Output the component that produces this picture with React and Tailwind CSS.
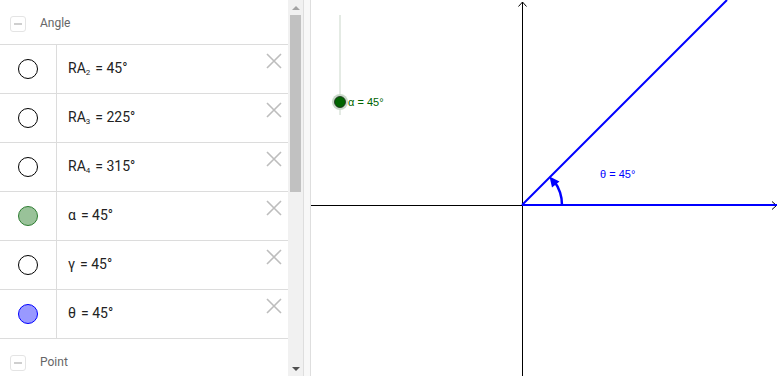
import React from 'react';

const rows = [
  { name: 'RA', sub: '2', value: '45°' },
  { name: 'RA', sub: '3', value: '225°' },
  { name: 'RA', sub: '4', value: '315°' },
  { name: 'α', value: '45°', fill: 'bg-[#99c299]', border: 'border-[#2e7d32]' },
  { name: 'γ', value: '45°' },
  { name: 'θ', value: '45°', fill: 'bg-[#9999ff]', border: 'border-[#0000ff]' },
];

function Cross() {
  return (
    <svg width="16" height="16" viewBox="0 0 16 16" className="absolute right-[6px] top-[8px]">
      <path d="M1 1 L15 15 M15 1 L1 15" stroke="#bdbdbd" strokeWidth="1.6" fill="none" />
    </svg>
  );
}

function GroupHeader({ label }) {
  return (
    <div className="flex h-[44px] shrink-0 items-center gap-[14px] pl-[10px] pt-[4px]">
      <div className="flex h-[16px] w-[16px] items-center justify-center rounded-[3px] border border-[#e4e4e4]">
        <div className="h-[2px] w-[8px] bg-[#cfcfcf]" />
      </div>
      <span className="-mt-[2px] text-[12px] text-[#666]">{label}</span>
    </div>
  );
}

export default function App() {
  return (
    <div
      className="flex h-[376px] w-[779px] overflow-hidden bg-white"
      style={{ fontFamily: 'Roboto, "Liberation Sans", sans-serif' }}
    >
      {/* algebra view */}
      <div className="flex w-[288px] shrink-0 flex-col overflow-hidden">
        <GroupHeader label="Angle" />
        {rows.map((r, i) => (
          <div key={i} className="relative flex h-[49px] shrink-0 border-t border-[#dcdcdc]">
            <div className="flex w-[57px] items-center justify-center border-r border-[#dcdcdc]">
              <div
                className={`h-[20px] w-[20px] rounded-full border ${r.fill || 'bg-white'} ${r.border || 'border-black'}`}
              />
            </div>
            <div className="flex items-center pb-[2px] pl-[11px] text-[14px] text-[#222]">
              <span>{r.name}</span>
              {r.sub && <span className="relative top-[5px] text-[8px]">{r.sub}</span>}
              <span className="ml-[5px]">= {r.value}</span>
            </div>
            <Cross />
          </div>
        ))}
        <div className="shrink-0 border-t border-[#dcdcdc]">
          <GroupHeader label="Point" />
        </div>
      </div>

      {/* scrollbar */}
      <div className="flex w-[15px] shrink-0 flex-col items-center bg-[#f1f1f1]">
        <div className="flex h-[15px] items-center justify-center">
          <div className="h-0 w-0 border-x-[4px] border-b-[4px] border-x-transparent border-b-[#a3a3a3]" />
        </div>
        <div className="h-[177px] w-[11px] bg-[#c1c1c1]" />
        <div className="flex-1" />
        <div className="flex h-[15px] items-center justify-center">
          <div className="h-0 w-0 border-x-[4px] border-t-[4px] border-x-transparent border-t-[#505050]" />
        </div>
      </div>

      {/* splitter */}
      <div className="w-[8px] shrink-0 border-x border-[#dedede] bg-[#f8f8f8]" />

      {/* graphics view */}
      <div className="relative flex-1">
        <svg width="468" height="376" className="block">
          {/* slider */}
          <line x1="29" y1="15" x2="29" y2="115" stroke="#c9d6c9" strokeWidth="1" />
          <circle cx="29" cy="102" r="8" fill="#c9d9c9" />
          <circle cx="29" cy="102" r="5.5" fill="#006400" stroke="#1b2a1b" strokeWidth="0.8" />
          <text x="37" y="106" fontSize="11" fill="#006400" fontFamily="'Liberation Sans', Arial, sans-serif">
            α = 45°
          </text>

          {/* axes */}
          <line x1="0" y1="205.5" x2="465" y2="205.5" stroke="#000" strokeWidth="1" />
          <path d="M461 201.5 L465.5 205.5 L461 209.5" stroke="#000" fill="none" strokeWidth="1" />
          <line x1="211.5" y1="376" x2="211.5" y2="2" stroke="#000" strokeWidth="1" />
          <path d="M207.5 6.5 L211.5 2 L215.5 6.5" stroke="#000" fill="none" strokeWidth="1" />

          {/* angle */}
          <line x1="211" y1="205" x2="466" y2="205" stroke="#0000ff" strokeWidth="2" />
          <line x1="211" y1="205" x2="416" y2="0" stroke="#0000ff" strokeWidth="2" />
          <path d="M251 205 A40 40 0 0 0 243 181" stroke="#0000ff" strokeWidth="2.5" fill="none" />
          <path d="M238.5 176.5 L248.5 181.5 L241 187.5 Z" fill="#0000ff" />
          <text x="289" y="178" fontSize="11" fill="#0000ff" fontFamily="'Liberation Sans', Arial, sans-serif">
            θ = 45°
          </text>
        </svg>
      </div>
    </div>
  );
}
